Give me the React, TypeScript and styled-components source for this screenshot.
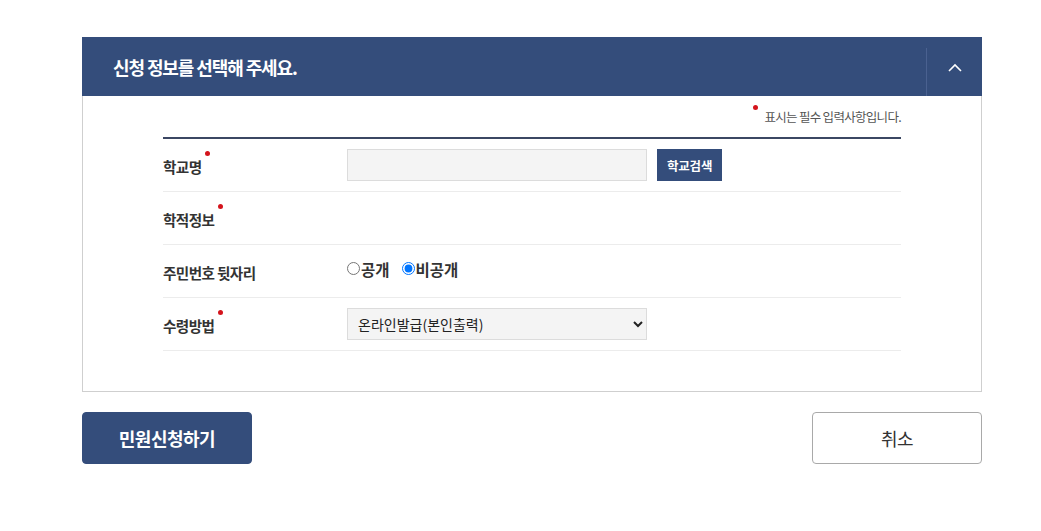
import React from 'react';
import styled, { createGlobalStyle } from 'styled-components';

const GlobalStyle = createGlobalStyle`
  html, body {
    margin: 0;
    padding: 0;
    background: #fff;
    font-family: 'Noto Sans CJK KR', 'Noto Sans', sans-serif;
    color: #333;
  }
`;

const Page = styled.div`
  width: 900px;
  padding: 37px 0 0 82px;
`;

const Panel = styled.section`
  border: 1px solid #cfcfcf;
  border-top: none;
`;

const Header = styled.div`
  display: flex;
  align-items: center;
  height: 59px;
  margin: 0 -1px;
  background: #344d7b;
`;

const Title = styled.h2`
  flex: 1;
  margin: 0;
  padding-left: 31px;
  color: #fff;
  font-size: 18px;
  font-weight: 700;
  letter-spacing: -1.1px;
`;

const Toggle = styled.button`
  display: flex;
  align-items: center;
  justify-content: center;
  width: 56px;
  height: 48px;
  margin-top: 11px;
  padding: 0 0 10px;
  border: none;
  border-left: 1px solid #4a6190;
  background: transparent;
  cursor: pointer;
`;

const Body = styled.div`
  padding: 0 80px 40px 80px;
`;

const Note = styled.p`
  display: flex;
  justify-content: flex-end;
  margin: 0;
  padding: 12px 0 11px;
  font-size: 12.5px;
  color: #555;
  letter-spacing: -0.7px;
  line-height: 18px;
`;

const Dot = styled.span<{ $top?: number }>`
  display: inline-block;
  width: 5px;
  height: 5px;
  margin: 0 6px 0 4px;
  border-radius: 50%;
  background: #d4141c;
  vertical-align: top;
  position: relative;
  top: ${p => p.$top ?? -3}px;
`;

const Table = styled.div`
  border-top: 2px solid #3b4763;
`;

const Row = styled.div`
  display: grid;
  grid-template-columns: 184px 1fr;
  align-items: center;
  height: 52px;
  border-bottom: 1px solid #ececec;
`;

const Label = styled.div`
  font-size: 14.6px;
  font-weight: 700;
  color: #333;
  letter-spacing: -0.6px;
  padding-top: 2px;
`;

const Field = styled.div`
  display: flex;
  align-items: center;
  gap: 10px;
`;

const TextInput = styled.input`
  box-sizing: border-box;
  width: 300px;
  height: 32px;
  border: 1px solid #dcdcdc;
  background: #f4f4f4;
  padding: 0 10px;
  font-family: inherit;
`;

const SmallButton = styled.button`
  height: 32px;
  padding: 0 10px;
  border: none;
  background: #344d7b;
  color: #fff;
  font-family: inherit;
  font-size: 12.5px;
  font-weight: 700;
  letter-spacing: -0.2px;
`;

const Radios = styled.div`
  display: flex;
  align-items: center;
  gap: 12px;
  margin-top: -5px;
  font-size: 15.5px;
  font-weight: 700;
  color: #333;
  label {
    display: flex;
    align-items: center;
  }
  input {
    margin: 0 1px 0 0;
    width: 13px;
    height: 13px;
  }
`;

const Select = styled.select`
  box-sizing: border-box;
  width: 300px;
  height: 32px;
  padding: 0 6px;
  border: 1px solid #dcdcdc;
  background: #f4f4f4;
  font-family: inherit;
  font-size: 14px;
  color: #222;
`;

const Actions = styled.div`
  display: flex;
  justify-content: space-between;
  margin-top: 20px;
`;

const ActionButton = styled.button<{ $primary?: boolean }>`
  width: 170px;
  height: 52px;
  border-radius: 4px;
  border: 1px solid ${p => (p.$primary ? '#344d7b' : '#a9a9a9')};
  background: ${p => (p.$primary ? '#344d7b' : '#fff')};
  color: ${p => (p.$primary ? '#fff' : '#333')};
  font-family: inherit;
  font-size: 18px;
  font-weight: ${p => (p.$primary ? 700 : 400)};
  letter-spacing: -0.5px;
`;

const App: React.FC = () => {
  return (
    <Page>
      <GlobalStyle />
      <Panel>
        <Header>
          <Title>신청 정보를 선택해 주세요.</Title>
          <Toggle aria-label="접기">
            <svg width="14" height="9" viewBox="0 0 14 9">
              <polyline points="1,8 7,2 13,8" fill="none" stroke="#fff" strokeWidth="1.6" />
            </svg>
          </Toggle>
        </Header>
        <Body>
          <Note>
            <Dot />표시는 필수 입력사항입니다.
          </Note>
          <Table>
            <Row>
              <Label>학교명<Dot $top={-5} /></Label>
              <Field>
                <TextInput type="text" />
                <SmallButton>학교검색</SmallButton>
              </Field>
            </Row>
            <Row>
              <Label>학적정보<Dot $top={-5} /></Label>
              <Field />
            </Row>
            <Row>
              <Label>주민번호 뒷자리</Label>
              <Radios>
                <label><input type="radio" name="rrn" />공개</label>
                <label><input type="radio" name="rrn" defaultChecked />비공개</label>
              </Radios>
            </Row>
            <Row>
              <Label>수령방법<Dot $top={-5} /></Label>
              <Field>
                <Select defaultValue="online">
                  <option value="online">온라인발급(본인출력)</option>
                </Select>
              </Field>
            </Row>
          </Table>
        </Body>
      </Panel>
      <Actions>
        <ActionButton $primary>민원신청하기</ActionButton>
        <ActionButton>취소</ActionButton>
      </Actions>
    </Page>
  );
};

export default App;
